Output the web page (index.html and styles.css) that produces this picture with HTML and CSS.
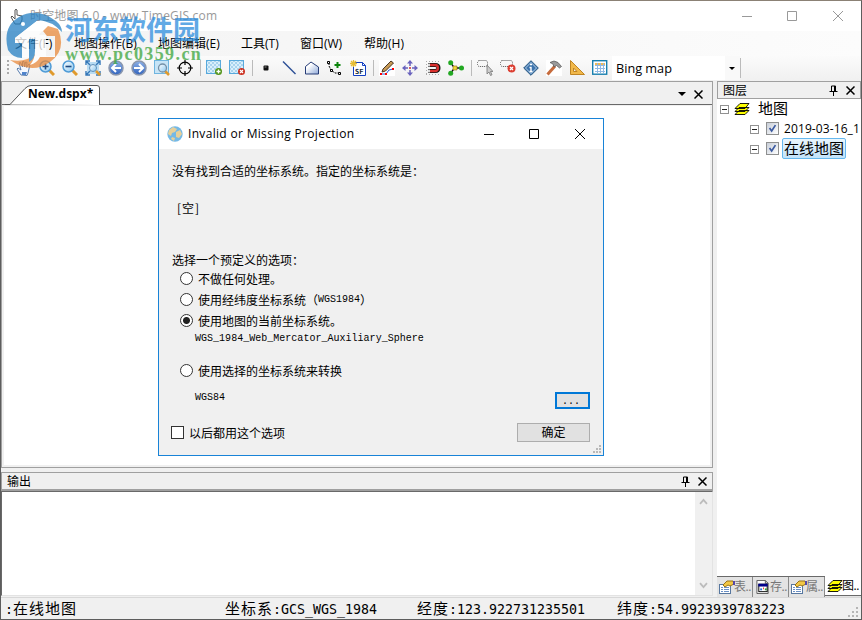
FILE: index.html
```
<!DOCTYPE html>
<html lang="zh-CN">
<head>
    <meta charset="UTF-8">
    <title>时空地图 6.0</title>
    <link rel="stylesheet" href="styles.css">
</head>
<body>
<svg class="defs">
    <defs>
        <linearGradient id="lens" x1="0" y1="0" x2="1" y2="1"><stop offset="0" stop-color="#fff"/><stop offset="1" stop-color="#8cc8f0"/></linearGradient>
        <linearGradient id="ball" x1="0" y1="0" x2="0" y2="1"><stop offset="0" stop-color="#8fb2e8"/><stop offset="1" stop-color="#2f62bd"/></linearGradient>
        <linearGradient id="poly" x1="0" y1="0" x2="1" y2="1"><stop offset=".3" stop-color="#fff"/><stop offset="1" stop-color="#8fa9d8"/></linearGradient>
        <pattern id="tiles" width="4" height="4" patternUnits="userSpaceOnUse"><rect width="4" height="4" fill="#d9effb"/><path d="M0 0h2v2H0zM2 2h2v2H2z" fill="#a9d3ee"/></pattern>
    </defs>
    <symbol id="i-pin" viewBox="0 0 9 11"><path d="M2.500 6.500V1h4v5.500M5.500 1v5M0.500 6.500h8M4.500 7v4" fill="none" stroke="#000"/></symbol>
    <symbol id="i-x" viewBox="0 0 9 9"><path d="M.5.5l8 8M8.500.5l-8 8" fill="none" stroke="#000" stroke-width="1.500"/></symbol>
    <symbol id="i-layers" viewBox="0 0 16 14">
        <path d="M1 12.500l4-4h10l-4 4zM1 9.500l4-4h10l-4 4zM1 6.500l5-5h9l-4 5z" fill="#ff0" stroke="#000" stroke-width=".9"/>
    </symbol>
    <symbol id="i-props" viewBox="0 0 16 14">
        <rect x=".5" y="4.500" width="11" height="9" fill="#fff" stroke="#57779f"/>
        <path d="M2 7.500h2M2 9.500h2M2 11.500h2M5 7.500h5M5 9.500h5M5 11.500h5" stroke="#6a8fc4"/>
        <path d="M4 5l4-4h6l1 3-4 2-2-1-3 2z" fill="#f2c744" stroke="#9a7418"/><path d="M14 1h2v4h-2z" fill="#5549a8"/>
    </symbol>
    <symbol id="i-page" viewBox="0 0 14 15">
        <path d="M.5.5h9l3 3v11H.5z" fill="#fff" stroke="#555"/><path d="M9.500.5v3h3" fill="none" stroke="#555"/>
        <rect x="2.500" y="4.500" width="9" height="8" fill="#fff" stroke="#000"/><path d="M2 4h10v3H2z" fill="#00008b"/>
        <path d="M4 9h2v2H4z" fill="#2a6cd8"/><path d="M7 8h1v2H7z" fill="#e33"/><path d="M9 9h2v2H9z" fill="#393"/>
    </symbol>
    <symbol id="i-grip" viewBox="0 0 11 11"><path d="M8 0h2v2H8zM4 4h2v2H4zM8 4h2v2H8zM0 8h2v2H0zM4 8h2v2H4zM8 8h2v2H8z" fill="#b5b5b5"/></symbol>
    <symbol id="i-grip-small" viewBox="0 0 9 9"><path d="M6 0h2v2H6zM3 3h2v2H3zM6 3h2v2H6zM0 6h2v2H0zM3 6h2v2H3zM6 6h2v2H6z" fill="#b8b8b8"/></symbol>
</svg>

<div class="window">
    <div class="titlebar">
        <svg class="app-icon" viewBox="0 0 14 17"><path d="M5 11V2q1-1.500 2 0v5l5 1v4l-2 4H5L1 9l1-1z" fill="#fff" stroke="#555"/></svg>
        <span class="app-title">时空地图 6.0 - www.TimeGIS.com</span>
        <svg class="win-buttons" viewBox="0 0 106 12"><path d="M0 6.500h10M45.500 1.500h9v9h-9zM91 1l10 10M101 1L91 11" fill="none" stroke="#999"/></svg>
    </div>

    <div class="menubar">
        <span class="menu-file">文件(F)</span>
        <span class="menu-op">地图操作(B)</span>
        <span class="menu-edit">地图编辑(E)</span>
        <span class="menu-tool">工具(T)</span>
        <span class="menu-win">窗口(W)</span>
        <span>帮助(H)</span>
    </div>

    <div class="toolbar">
        <i class="handle"></i>
        <!-- navigation -->
        <svg class="tool" viewBox="0 0 16 16"><path d="M5 15L1 9l1-1 3 2-2-7 1.500-.5L6.500 7V1.500H8L8.500 7l1-5 1.500.3-.4 5L13 4l1 .6L12 13l-1 2.500z" fill="#f4f8ff" stroke="#5b7fae"/><path d="M6 12h5l-1 3H6z" fill="#4f83cb"/></svg>
        <svg class="tool" viewBox="0 0 16 16"><path d="M10 10l5 5" stroke="#e09a2c" stroke-width="3"/><circle cx="6.500" cy="6.500" r="5.500" fill="url(#lens)" stroke="#4f9bd6" stroke-width="1.500"/><path d="M3.500 6.500h6M6.500 3.500v6" stroke="#204a80" stroke-width="1.600"/></svg>
        <svg class="tool" viewBox="0 0 16 16"><path d="M10 10l5 5" stroke="#e09a2c" stroke-width="3"/><circle cx="6.500" cy="6.500" r="5.500" fill="url(#lens)" stroke="#4f9bd6" stroke-width="1.500"/><path d="M3.500 6.500h6" stroke="#204a80" stroke-width="1.600"/></svg>
        <svg class="tool" viewBox="0 0 16 16"><rect x="2" y="2" width="12" height="12" fill="#b9dcf3"/><path d="M1 5V1h4M11 1h4v4M15 11v4h-4M5 15H1v-4M1 1l4 4M15 1l-4 4M1 15l4-4" fill="none" stroke="#3477b8" stroke-width="1.400"/><circle cx="8" cy="8" r="3.500" fill="url(#lens)" stroke="#5f8fb8"/><path d="M11 11l4 4" stroke="#e09a2c" stroke-width="2.500"/></svg>
        <svg class="tool" viewBox="0 0 16 16"><circle cx="8" cy="8" r="7" fill="url(#ball)" stroke="#8b97ad" stroke-width="1.500"/><path d="M13 8H4M8 4L4 8l4 4" fill="none" stroke="#fff" stroke-width="2"/></svg>
        <svg class="tool" viewBox="0 0 16 16"><circle cx="8" cy="8" r="7" fill="url(#ball)" stroke="#8b97ad" stroke-width="1.500"/><path d="M3 8h9M8 4l4 4-4 4" fill="none" stroke="#fff" stroke-width="2"/></svg>
        <svg class="tool" viewBox="0 0 16 16"><rect x=".5" y=".5" width="14" height="13" fill="#c7e4f6" stroke="#70b5df"/><path d="M11 11l4 4" stroke="#e09a2c" stroke-width="2.500"/><circle cx="8.500" cy="8" r="4" fill="url(#lens)" stroke="#7590a7" stroke-width="1.300"/></svg>
        <svg class="tool" viewBox="0 0 16 16"><circle cx="8" cy="8" r="5.800" fill="none" stroke="#000" stroke-width="1.200"/><path d="M8 0v5M8 11v5M0 8h5M11 8h5" stroke="#000" stroke-width="1.200"/></svg>
        <i class="sep"></i>
        <!-- layers -->
        <svg class="tool" viewBox="0 0 16 16"><rect x=".5" y=".5" width="14" height="13" fill="url(#tiles)" stroke="#58a9dc"/><circle cx="12.500" cy="11.500" r="3.500" fill="#54951c"/><path d="M10.500 11.500h4M12.500 9.500v4" stroke="#fff" stroke-width="1.300"/></svg>
        <svg class="tool" viewBox="0 0 16 16"><rect x=".5" y=".5" width="14" height="13" fill="url(#tiles)" stroke="#58a9dc"/><circle cx="12.500" cy="11.500" r="3.500" fill="#cc3020"/><path d="M11 10l3 3M14 10l-3 3" stroke="#fff" stroke-width="1.200"/></svg>
        <i class="sep"></i>
        <!-- editing -->
        <svg class="tool" viewBox="0 0 16 16"><rect x="5.500" y="5.500" width="5" height="5" rx="1" fill="#111"/><path d="M6.500 7h2" stroke="#888"/></svg>
        <svg class="tool" viewBox="0 0 16 16"><path d="M2 1.500l12.500 12.500" stroke="#2c4f96" stroke-width="1.400"/></svg>
        <svg class="tool" viewBox="0 0 16 16"><path d="M1.500 14V6.500L7 2l7.500 5V14z" fill="url(#poly)" stroke="#263c77"/></svg>
        <svg class="tool" viewBox="0 0 16 16"><path d="M2 3v3l2 4 4 3h4" fill="none" stroke="#000" stroke-dasharray="2 1"/><path d="M.5 1.500h2v2h-2zM3.500 9.500h2v2h-2zM11.500 12.500h2v2h-2z" fill="#fff" stroke="#000"/><path d="M7.500 5h6M10.500 2v6" stroke="#0b840b" stroke-width="2"/></svg>
        <svg class="tool" viewBox="0 0 16 16"><path d="M3.500 2.500h9l3 3v10h-12z" fill="#fff" stroke="#123fc2"/><path d="M12.500 2.500v3h3" fill="none" stroke="#123fc2"/><path d="M0 3.500h7M3.500 0v7M1 1l5 5M6 1L1 6" stroke="#e7bd33" stroke-width="1.300"/><text class="sf" x="5" y="13.500">SF</text></svg>
        <i class="sep"></i>
        <svg class="tool" viewBox="0 0 16 16"><path d="M0 0h16v16H0z" fill="#fff"/><path d="M2 14h5l3-4 4-1" fill="none" stroke="#245bd8"/><path d="M3 12l1-3 8-8 2.500 2-8 8z" fill="#c79a55" stroke="#493522"/><path d="M1 13h2v2H1zM6 13h2v2H6zM13 8h2v2h-2z" fill="#f00"/></svg>
        <svg class="tool" viewBox="0 0 16 16"><path d="M8 1v14M1 8h14" stroke="#6962bd" stroke-width="1.500" stroke-dasharray="5 4"/><path d="M8 0l3 3.500H5zM8 16l3-3.500H5zM0 8l3.500-3v6zM16 8l-3.500-3v6z" fill="#6962bd"/><path d="M7 7h2v2H7z" fill="#d45c63"/></svg>
        <svg class="tool" viewBox="0 0 16 16"><path d="M1 1.500h14M1 14.500h14M1.500 1v14" stroke="#aaa" stroke-dasharray="1 2"/><path d="M3 5h7q3.500 0 3.500 3T10 11H3" fill="none" stroke="#111" stroke-width="4"/><path d="M5 5h5q3 0 3 3t-3 3H5" fill="none" stroke="#d9302e" stroke-width="2.300"/><path d="M3 3.500h2v3H3zM3 9.500h2v3H3z" fill="#ddd"/></svg>
        <svg class="tool" viewBox="0 0 16 16"><path d="M2.500 2.500l4 5.500-4 5.500M7 8h7" fill="none" stroke="#111" stroke-width="1.300"/><path d="M5 6h4v4H5z" fill="#f2d83b" stroke="#806c11" stroke-width=".6"/><circle cx="2.700" cy="2.800" r="2.500" fill="#22a822"/><circle cx="2.700" cy="13.200" r="2.500" fill="#22a822"/><circle cx="13.500" cy="8" r="2.500" fill="#22a822"/></svg>
        <i class="sep"></i>
        <!-- selection and tools -->
        <svg class="tool" viewBox="0 0 16 16"><rect x=".5" y=".5" width="10" height="6" rx="2" fill="none" stroke="#555" stroke-dasharray="1 1"/><path d="M10 5v9l2-2 1.500 3.500 1.500-.7-1.500-3.300h2.500z" fill="#ccc" stroke="#777" stroke-width=".8"/></svg>
        <svg class="tool" viewBox="0 0 16 16"><rect x=".5" y=".5" width="12" height="6" rx="2" fill="none" stroke="#555" stroke-dasharray="1 1"/><circle cx="11.500" cy="8.500" r="4" fill="#dc3f32"/><path d="M10 7l3 3M13 7l-3 3" stroke="#fff" stroke-width="1.300"/></svg>
        <svg class="tool" viewBox="0 0 16 16"><path d="M8 .7L15.300 8 8 15.300.7 8z" fill="#3d74ad" stroke="#285780"/><path d="M8 2.500L13.500 8 8 13.500 2.500 8z" fill="none" stroke="#cfe3f5" stroke-width=".8"/><path d="M7 4.500h2M6.500 7.500H8v4M6.500 11.500h3" fill="none" stroke="#fff" stroke-width="1.400"/></svg>
        <svg class="tool" viewBox="0 0 16 16"><path d="M0 0h16v16H0z" fill="#fff"/><path d="M1.500 14.500L9 6" stroke="#c66b3c" stroke-width="3"/><path d="M4 2.500Q8-.5 12 2.500l3.500 4-2 1.500-3-2.500L8 7 7 4z" fill="#9a9a9a" stroke="#555" stroke-width=".7"/></svg>
        <svg class="tool" viewBox="0 0 16 16"><path d="M1.500.5v14h14zM4.500 8v3.500H8z" fill="#f1b84a" fill-rule="evenodd" stroke="#bf8423"/></svg>
        <svg class="tool" viewBox="0 0 16 16"><rect x=".7" y=".7" width="14" height="13.500" fill="#fff" stroke="#187fae" stroke-width="1.400"/><path d="M3 3h10v2H3z" fill="#f0ba54"/><path d="M3 5.500h10M3 8.500h10M3 11.500h10M5.500 3v10M8.500 3v10M11.500 3v10" stroke="#90b9e4"/></svg>
        <div class="combo"><span>Bing map</span><i class="arrow"></i></div>
        <i class="end"></i>
    </div>

    <div class="workspace">
        <div class="left">
            <div class="document">
                <div class="tabs">
                    <svg class="tab-shape" viewBox="0 0 95 20"><path d="M0 19.500h5L20 3.500q3-3 6-3h66q2.500 0 2.500 2.500v17" fill="#fff" stroke="#555"/></svg>
                    <b class="tab-name">New.dspx*</b>
                    <i class="arrow"></i>
                    <svg class="x"><use href="#i-x"/></svg>
                </div>
                <div class="canvas"></div>
            </div>
            <div class="output">
                <div class="pane-title">
                    <span>输出</span>
                    <svg class="pin"><use href="#i-pin"/></svg>
                    <svg class="x"><use href="#i-x"/></svg>
                </div>
                <div class="output-body">
                    <svg class="scroll" viewBox="0 0 17 104"><path d="M5 12l3.500-4 3.500 4M5 92l3.500 4 3.500-4" fill="none" stroke="#bcbcbc" stroke-width="1.800"/></svg>
                </div>
            </div>
        </div>

        <div class="layers">
            <div class="pane-title">
                <span>图层</span>
                <svg class="pin"><use href="#i-pin"/></svg>
                <svg class="x"><use href="#i-x"/></svg>
            </div>
            <div class="tree">
                <div class="node root"><i class="minus"></i><svg class="layer-icon"><use href="#i-layers"/></svg><span class="song">地图</span></div>
                <div class="node"><i class="minus"></i><svg class="check" viewBox="0 0 13 13"><path d="M3 6l2.500 3.500L10 2.500" fill="none" stroke="#3c5aa0" stroke-width="2"/></svg><span class="layer-name">2019-03-16_1</span></div>
                <div class="node"><i class="minus"></i><svg class="check" viewBox="0 0 13 13"><path d="M3 6l2.500 3.500L10 2.500" fill="none" stroke="#3c5aa0" stroke-width="2"/></svg><span class="song selected">在线地图</span></div>
            </div>
            <div class="bottom-tabs">
                <span class="btab"><svg><use href="#i-props"/></svg>表..</span>
                <span class="btab"><svg><use href="#i-page"/></svg>存..</span>
                <span class="btab"><svg><use href="#i-props"/></svg>属..</span>
                <span class="btab active"><svg><use href="#i-layers"/></svg>图..</span>
            </div>
        </div>
    </div>

    <div class="status">
        <span class="st-layer">:<em>在线地图</em></span>
        <span class="st-crs"><em>坐标系</em>:GCS_WGS_1984</span>
        <span class="st-lon"><em>经度</em>:123.922731235501</span>
        <span class="st-lat"><em>纬度</em>:54.9923939783223</span>
        <svg class="grip"><use href="#i-grip"/></svg>
    </div>
</div>

<div class="dialog">
    <div class="dialog-title">
        <svg class="globe" viewBox="0 0 16 16"><circle cx="8" cy="8" r="7.700" fill="#75b9e6"/><path d="M2 4l4-3 4 2-2 3-3 1-1 3-3-2zM9 6l4-2 2 4-3 4-3-1zM5 11l3 1-1 3-3-2z" fill="#e6d09a"/></svg>
        <span class="dialog-name">Invalid or Missing Projection</span>
        <svg class="win-buttons" viewBox="0 0 106 12"><path d="M0 6.500h10M45.500 1.500h9v9h-9zM91 1l10 10M101 1L91 11" fill="none" stroke="#000"/></svg>
    </div>
    <div class="dialog-body">
        <p class="message">没有找到合适的坐标系统。指定的坐标系统是：</p>
        <p class="empty"><span>[</span>空<span>]</span></p>
        <p class="prompt">选择一个预定义的选项：</p>
        <label class="option"><i class="radio"></i>不做任何处理。</label>
        <label class="option"><i class="radio"></i>使用经纬度坐标系统（<code>WGS1984</code>）</label>
        <label class="option"><i class="radio on"></i>使用地图的当前坐标系统。</label>
        <code class="crs">WGS_1984_Web_Mercator_Auxiliary_Sphere</code>
        <label class="option last"><i class="radio"></i>使用选择的坐标系统来转换</label>
        <div class="row pick"><code>WGS84</code><span class="button browse">...</span></div>
        <div class="row"><label class="always"><i class="box"></i>以后都用这个选项</label><span class="button">确定</span></div>
    </div>
    <svg class="grip small"><use href="#i-grip-small"/></svg>
</div>

<div class="watermark">
    <svg class="wm-logo" viewBox="0 0 58 58">
        <path d="M3 38Q-3 15 14 5 32-5 51 9 57 14 57 20 47 9 33 8L10 26v5h7v15Q8 46 3 38z" fill="#2580c3"/>
        <path d="M53 17Q62 38 45 50 27 63 5 48q16 3 25-6 5-6 5-19h6v22h9V24h-8l-4-5 5-5z" fill="#e98a3c"/>
        <path d="M35 23h6v22h-6q-3 6-10 8 5-6 5-14V27h-6v18h-7V31h-7v-5L32 9l8 6-6 8z" fill="#fff"/>
        <path d="M24 27h6v12q0 8-6 11z" fill="#2580c3"/>
        <circle cx="18" cy="12" r="2" fill="#fff"/>
    </svg>
    <div class="wm-text"><span class="wm-name">河东软件园</span><span class="wm-url">www.pc0359.cn</span></div>
</div>
</body>
</html>
```
FILE: styles.css
```
* {
    box-sizing: border-box;
}
body {
    margin: 0;
    width: 862px;
    height: 620px;
    overflow: hidden;
    position: relative;
    font: 12px/16px "Open Sans", "Noto Sans CJK SC", sans-serif;
    color: #000;
}
svg {
    display: block;
    flex: none;
}
i, em {
    font-style: normal;
}
i {
    display: block;
    flex: none;
}
p {
    margin: 0;
}
.defs {
    position: absolute;
    width: 0;
    height: 0;
}
.window {
    width: 862px;
    height: 620px;
    display: flex;
    flex-direction: column;
    border: 1px solid #5d5d5d;
    border-top-color: #8b8175;
    background: #f0f0f0;
}

/* title, menu, toolbar */
.titlebar {
    height: 30px;
    display: flex;
    align-items: center;
    background: #fff;
    padding-left: 9px;
}
.app-icon {
    width: 14px;
    height: 17px;
    margin-right: 6px;
}
.app-title {
    color: #999;
    font-size: 12px;
    letter-spacing: .18px;
}
.win-buttons {
    width: 106px;
    height: 12px;
    margin-left: auto;
}
.titlebar .win-buttons {
    margin-right: 13px;
}
.menubar {
    height: 25px;
    display: flex;
    align-items: center;
    padding-left: 14px;
    background: linear-gradient(90deg, #f3f3f3, #fcfcfc);
    white-space: nowrap;
}
.menu-file { width: 59px; }
.menu-op { width: 84px; }
.menu-edit { width: 83px; }
.menu-tool { width: 59px; }
.menu-win { width: 64px; }
.toolbar {
    height: 25px;
    display: flex;
    align-items: center;
    padding-bottom: 1px;
    background: linear-gradient(#fbfbfb, #f0f0f0);
}
.handle {
    width: 3px;
    height: 16px;
    margin: 0 3px 0 6px;
    background: repeating-linear-gradient(#aaa 0 2px, transparent 2px 4px);
    border-right: 1px solid #f6f6f6;
}
.tool {
    width: 16px;
    height: 16px;
    margin: 0 4px 0 3px;
}
.sf {
    font: bold 7px "DejaVu Sans Mono", monospace;
    fill: #123;
}
.sep {
    width: 1px;
    height: 16px;
    margin: 0 2px 0 3px;
    background: #bbb;
}
.combo {
    width: 128px;
    height: 24px;
    display: flex;
    align-items: center;
    padding: 0 5px 0 4px;
    background: linear-gradient(90deg, #fff 113px, #f9f9f9 113px);
    font-size: 12.700px;
}
.arrow {
    border: 4px solid transparent;
    border-top-color: #000;
    border-bottom: 0;
}
.combo .arrow {
    margin-left: auto;
    border-width: 3px 3px 0;
}
.end {
    width: 1px;
    height: 20px;
    background: #bbb;
}

/* docked panes */
.workspace {
    height: 516px;
    display: flex;
}
.left {
    width: 712px;
    margin-right: 4px;
}
.document {
    height: 387px;
    display: flex;
    flex-direction: column;
    border: 1px solid #a0a0a0;
}
.tabs {
    height: 23px;
    display: flex;
    align-items: center;
    position: relative;
    padding: 2px 9px 0 26px;
    border-bottom: 1px solid #696969;
}
.tab-shape {
    position: absolute;
    left: 3px;
    top: 3px;
    width: 95px;
    height: 20px;
}
.tab-name {
    position: relative;
    font-size: 12px;
}
.tabs .arrow {
    margin-left: auto;
    margin-right: 8px;
}
.x {
    width: 9px;
    height: 9px;
}
.pin {
    width: 9px;
    height: 11px;
    margin-left: auto;
    margin-right: 8px;
}
.canvas {
    flex: 1;
    margin: 1px 2px 2px;
    background: #fff;
}
.output {
    height: 125px;
    margin-top: 4px;
}
.pane-title {
    height: 18px;
    display: flex;
    align-items: center;
    border: 1px solid #a0a0a0;
    padding: 1px 5px 0;
    font-size: 12px;
}
.output .pane-title {
    height: 19px;
    border-bottom-width: 2px;
}
.output-body {
    height: 105px;
    background: #fff;
    border: 1px solid #696969;
    border-right-color: #e3e3e3;
    border-bottom-color: #e3e3e3;
    display: flex;
    justify-content: flex-end;
}
.scroll {
    width: 17px;
    height: 103px;
    background: #f0f0f0;
}
.layers {
    width: 144px;
    display: flex;
    flex-direction: column;
}
.tree {
    flex: 1;
    padding-left: 3px;
    background: #fff;
}
.node {
    display: flex;
    align-items: center;
    height: 20px;
    padding-left: 30px;
    white-space: nowrap;
}
.root {
    padding-left: 0;
}
.minus {
    width: 9px;
    height: 9px;
    border: 1px solid #919191;
    background: linear-gradient(#222, #222) 1px 3px / 5px 1px no-repeat;
}
.root .minus {
    margin-right: 5px;
}
.layer-icon {
    width: 16px;
    height: 14px;
    margin-right: 8px;
}
.check {
    width: 13px;
    height: 13px;
    margin: -2px 5px 0 7px;
    border: 1px solid #8e8f8f;
    background: linear-gradient(135deg, #c8ced8, #fff);
}
.layer-name {
    letter-spacing: .1px;
}
.song {
    font: 15px/19px "Noto Sans CJK SC", sans-serif;
}
.root .song {
    margin-top: -4px;
}
.selected {
    height: 21px;
    margin: -1px 0 0 -2px;
    padding: 0 1px;
    border: 1px solid #66b8ee;
    border-radius: 2px;
    background: linear-gradient(#eaf6fe, #c2e3fa);
    line-height: 17px;
}
.bottom-tabs {
    height: 21px;
    display: flex;
    background: #e3e3e3;
    border-top: 1px solid #696969;
}
.btab {
    width: 36px;
    height: 20px;
    display: flex;
    align-items: center;
    overflow: hidden;
    padding-left: 2px;
    color: #777;
    white-space: nowrap;
    letter-spacing: -.5px;
    box-shadow: inset -1px 0 #8a8a8a;
}
.btab svg {
    width: 16px;
    height: 14px;
    margin-right: -1px;
}
.btab.active {
    margin-top: -1px;
    background: #fff;
    color: #000;
    border-bottom: 1px solid #696969;
    box-shadow: none;
}

/* status bar */
.status {
    height: 22px;
    display: flex;
    align-items: center;
    position: relative;
    padding-left: 4px;
    border-top: 1px solid #d8d8d8;
    font: 13.290px/20px "DejaVu Sans Mono", "Noto Sans CJK SC", monospace;
    white-space: nowrap;
}
.status em {
    font: 15px/20px "Noto Sans CJK SC", sans-serif;
    letter-spacing: 1px;
}
.st-layer { width: 220px; }
.st-crs { width: 192px; }
.st-lon { width: 200px; }
.grip {
    position: absolute;
    right: 2px;
    bottom: 1px;
    width: 11px;
    height: 11px;
}
.small {
    right: 1px;
    width: 9px;
    height: 9px;
}

/* projection dialog */
.dialog {
    position: absolute;
    left: 158px;
    top: 118px;
    width: 446px;
    height: 338px;
    border: 1px solid #1883d7;
    background: #f0f0f0;
}
.dialog-title {
    height: 30px;
    display: flex;
    align-items: center;
    padding: 0 13px 1px 8px;
    background: #fff;
    font-size: 12px;
}
.dialog-name {
    letter-spacing: .32px;
    padding-top: 1px;
}
.globe {
    width: 16px;
    height: 16px;
    margin-right: 5px;
}
.dialog-title .win-buttons {
    margin-right: 0;
}
.dialog-body {
    padding: 12px 13px 0;
    font: 12px/20px "Noto Sans CJK SC", sans-serif;
}
.dialog code {
    font: 10px/14px "Liberation Mono", monospace;
}
.empty {
    margin: 17px 0 32px 4px;
}
.empty span {
    display: inline-block;
    width: 6px;
    text-align: center;
}
.option {
    display: flex;
    align-items: center;
    height: 21px;
    margin-left: 8px;
}
.prompt {
    margin-bottom: -2px;
}
.radio {
    width: 13px;
    height: 13px;
    margin-right: 5px;
    border: 1px solid #333;
    border-radius: 50%;
    background: #fff;
}
.radio.on {
    background: radial-gradient(circle, #222 3px, #fff 4px);
}
.dialog .crs {
    display: block;
    height: 14px;
    margin-left: 23px;
    padding-top: 1px;
    letter-spacing: .02px;
}
.last {
    margin-top: 15px;
}
.row {
    display: flex;
    align-items: center;
    justify-content: space-between;
    height: 19px;
}
.pick {
    height: 17px;
    margin: 11px 0 14px;
    padding-left: 23px;
}
.pick code {
    margin-top: -6px;
}
.always {
    display: flex;
    align-items: center;
    line-height: 18px;
}
.box {
    width: 13px;
    height: 13px;
    margin: 0 5px 0 -1px;
    border: 1px solid #333;
    background: #fff;
}
.button {
    width: 73px;
    height: 19px;
    border: 1px solid #adadad;
    background: #e1e1e1;
    text-align: center;
    line-height: 16px;
}
.browse {
    width: 35px;
    height: 17px;
    padding-right: 3px;
    border: 2px solid #0078d7;
    font: 10px/16px "Liberation Mono", monospace;
}

/* site mark over the window corner */
.watermark {
    position: absolute;
    left: 5px;
    top: 12px;
    display: flex;
    opacity: .75;
}
.wm-logo {
    width: 58px;
    height: 58px;
}
.wm-text {
    display: flex;
    flex-direction: column;
    padding: 3px 0 0 2px;
    white-space: nowrap;
}
.wm-name {
    font: bold 27px/27px "Noto Sans CJK SC", sans-serif;
    color: #2c8ddd;
}
.wm-url {
    font: bold 18px/24px "Liberation Serif", serif;
    letter-spacing: 1.400px;
    color: #3ca53c;
}
```
